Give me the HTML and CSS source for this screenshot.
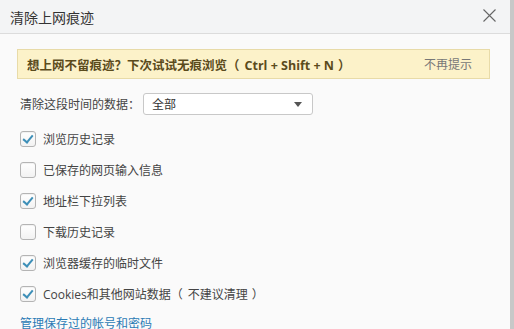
FILE: index.html
```html
<!DOCTYPE html>
<html>
<head>
  <meta charset="utf-8">
  <title>清除上网痕迹</title>
  <link rel="stylesheet" href="styles.css">
</head>
<body>
  <div class="dialog">
    <div class="header">
      <span class="title">清除上网痕迹</span>
      <span class="close">
        <svg width="13" height="13" viewBox="0 0 13 13"><path d="M0.5 0.5L12.5 12.5M12.5 0.5L0.5 12.5" stroke="#666" stroke-width="1.1" fill="none"/></svg>
      </span>
    </div>

    <div class="content">
      <div class="notice">
        <span class="notice-text">想上网不留痕迹？下次试试无痕浏览（<span class="paren">Ctrl + Shift + N</span>）</span>
        <span class="notice-hide">不再提示</span>
      </div>

      <div class="range-row">
        <span class="label">清除这段时间的数据：</span>
        <div class="select">
          <span>全部</span>
          <span class="arrow"></span>
        </div>
      </div>

      <div class="options">
        <label class="option"><span class="box checked"></span>浏览历史记录</label>
        <label class="option"><span class="box"></span>已保存的网页输入信息</label>
        <label class="option"><span class="box checked"></span>地址栏下拉列表</label>
        <label class="option"><span class="box"></span>下载历史记录</label>
        <label class="option"><span class="box checked"></span>浏览器缓存的临时文件</label>
        <label class="option"><span class="box checked"></span>Cookies和其他网站数据（<span class="paren">不建议清理</span>）</label>
      </div>

      <a class="manage" href="#">管理保存过的帐号和密码</a>
    </div>
  </div>
</body>
</html>
```

FILE: styles.css
```css
body {
  margin: 0;
  font-family: "Open Sans", "Noto Sans CJK SC", sans-serif;
  font-size: 12px;
  color: #444;
  background: #fafafa;
  overflow: hidden;
}

.dialog {
  width: 510px;
  height: 329px;
  border-right: 4px solid #c8c8c8;
  background: #fafafa;
}

.header {
  height: 33px;
  background: #f3f4f5;
  border-bottom: 1px solid #dcdcdc;
  display: flex;
  align-items: center;
  justify-content: space-between;
  padding: 0 14px 0 10px;
}

.title {
  font-size: 14px;
  color: #333;
}

.close {
  display: flex;
  margin-top: -2px;
}

.content {
  padding: 15px 20px 0 17px;
}

.notice {
  height: 28px;
  background: #fcf2c9;
  border: 1px solid #e8dba8;
  display: flex;
  align-items: center;
  justify-content: space-between;
  padding: 0 17px 0 9px;
}

.notice-text {
  font-weight: bold;
  font-size: 12.5px;
  color: #5b4b1c;
}

.paren {
  margin: 0 4px 0 5px;
}

.notice-hide {
  color: #777;
  font-size: 12px;
}

.range-row {
  display: flex;
  align-items: center;
  margin-top: 14px;
  padding-left: 3px;
}

.label {
  color: #444;
}

.select {
  width: 150px;
  height: 20px;
  margin-left: 3px;
  border: 1px solid #c8c8c8;
  border-radius: 3px;
  background: #fff;
  display: flex;
  align-items: center;
  justify-content: space-between;
  padding: 0 10px 0 8px;
  color: #333;
}

.arrow {
  width: 0;
  height: 0;
  border-left: 4px solid transparent;
  border-right: 4px solid transparent;
  border-top: 5px solid #555;
}

.options {
  margin-top: 8px;
  padding-left: 3px;
}

.option {
  display: flex;
  align-items: center;
  height: 31px;
  color: #444;
}

.box {
  width: 14px;
  height: 14px;
  border: 1px solid #b4b4b4;
  border-radius: 3px;
  background: linear-gradient(#fff, #f2f2f2);
  margin-right: 7px;
  position: relative;
  box-shadow: inset 0 1px 1px rgba(0, 0, 0, 0.06);
}

.box.checked::after {
  content: "";
  position: absolute;
  left: 4px;
  top: 1px;
  width: 4px;
  height: 8px;
  border-right: 2px solid #3d8fb8;
  border-bottom: 2px solid #3d8fb8;
  transform: rotate(40deg);
}

.manage {
  display: block;
  margin-top: 5px;
  padding-left: 3px;
  color: #2b7bb5;
  text-decoration: none;
}
```
